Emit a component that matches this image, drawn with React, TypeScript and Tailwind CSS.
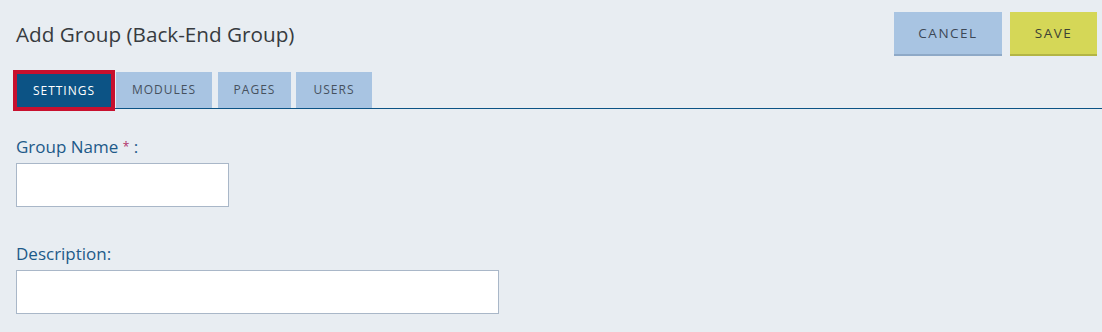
import React from "react";

export default function App() {
  const font = { fontFamily: '"Open Sans", "Lato", sans-serif' };
  return (
    <div className="w-[1102px] h-[332px] bg-[#e8edf2] overflow-hidden" style={font}>
      <div className="flex items-center justify-between pl-4 pr-[5px] pt-3">
        <h1 className="text-[20.7px] leading-[28px] text-[#373b40]">Add Group (Back-End Group)</h1>
        <div className="flex gap-2">
          <button className="w-[108px] h-[44px] bg-[#a8c4e2] border-b-2 border-[#8ea9c7] text-[13.5px] tracking-[1.5px] text-[#3d4856]">
            CANCEL
          </button>
          <button className="w-[87px] h-[44px] bg-[#d5d757] border-b-2 border-[#b3b545] text-[13.5px] tracking-[1.5px] text-[#3d4235]">
            SAVE
          </button>
        </div>
      </div>
      <div className="mt-4 ml-[13px] flex items-end border-b border-[#0c5385] h-[37px]">
        <div className="-mb-[3px] h-[41px] w-[102px] border-4 border-[#c8102e] bg-[#0c5385] flex items-center justify-center text-[12px] tracking-[1px] text-white">
          SETTINGS
        </div>
        <div className="ml-px h-[36px] w-[96px] bg-[#a8c4e2] flex items-center justify-center text-[12px] tracking-[1px] text-[#46515e]">
          MODULES
        </div>
        <div className="ml-[6px] h-[36px] w-[73px] bg-[#a8c4e2] flex items-center justify-center text-[12px] tracking-[1px] text-[#46515e]">
          PAGES
        </div>
        <div className="ml-[5px] h-[36px] w-[76px] bg-[#a8c4e2] flex items-center justify-center text-[12px] tracking-[1px] text-[#46515e]">
          USERS
        </div>
      </div>
      <div className="pl-4 pt-[26px]">
        <label className="block text-[17px] leading-[24px] text-[#1d5a89]">
          Group Name <span className="text-[#b0306a] text-[12px] align-top">*</span> :
        </label>
        <input className="mt-[4px] block w-[213px] h-[44px] bg-white border border-[#a9b7c8] outline-none" />
        <label className="mt-[35px] block text-[17px] leading-[24px] text-[#1d5a89]">Description:</label>
        <input className="mt-[4px] block w-[483px] h-[44px] bg-white border border-[#a9b7c8] outline-none" />
      </div>
    </div>
  );
}
